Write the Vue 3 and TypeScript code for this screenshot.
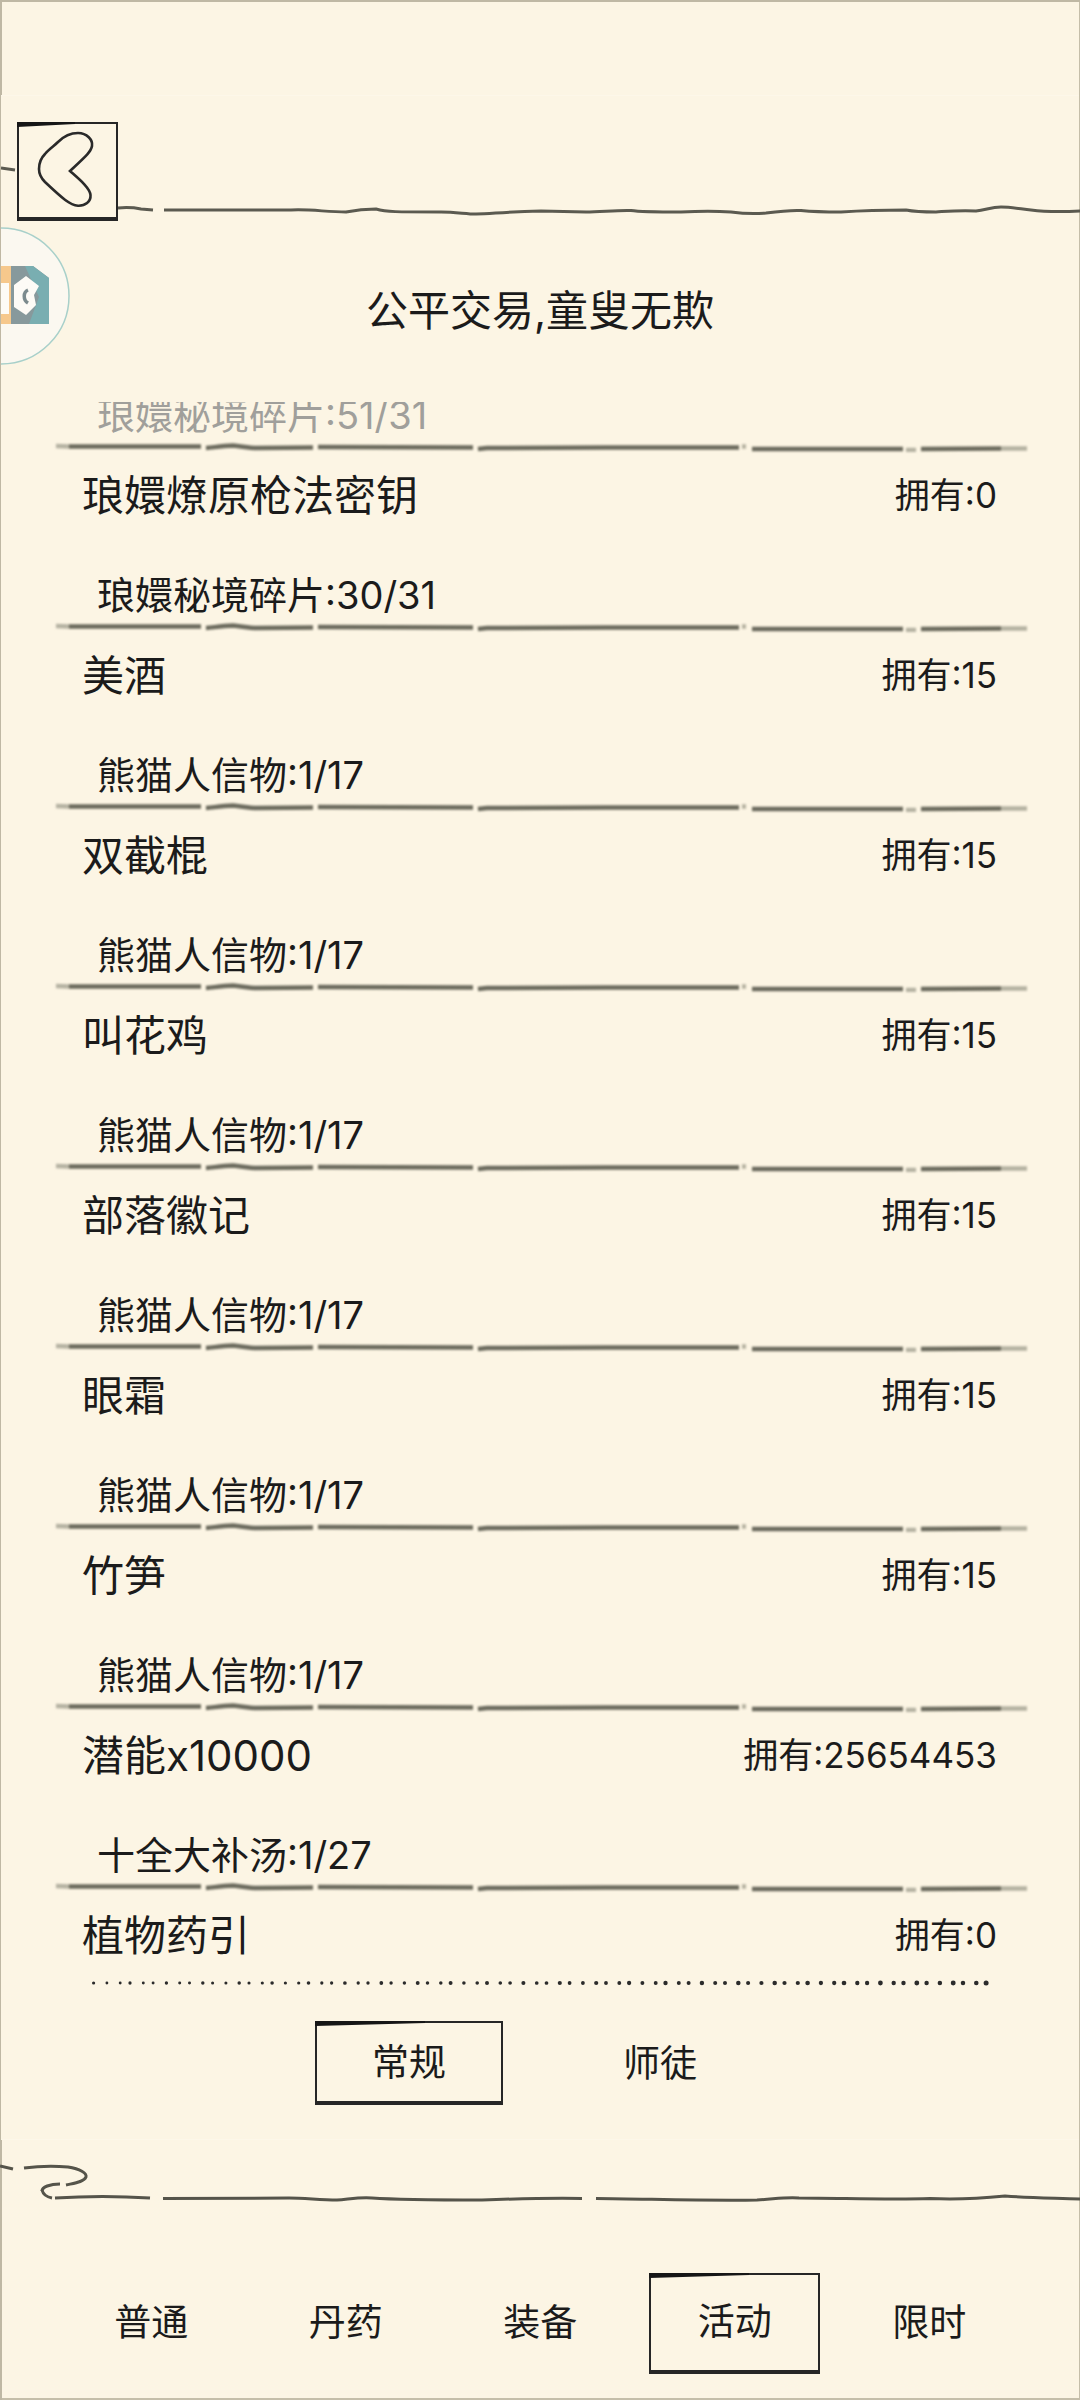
<script setup lang="ts">
interface Row {
  cost: string;
  name: string;
  own: string;
}

const rows: Row[] = [
  { cost: "琅嬛秘境碎片:51/31", name: "琅嬛燎原枪法密钥", own: "拥有:0" },
  { cost: "琅嬛秘境碎片:30/31", name: "美酒", own: "拥有:15" },
  { cost: "熊猫人信物:1/17", name: "双截棍", own: "拥有:15" },
  { cost: "熊猫人信物:1/17", name: "叫花鸡", own: "拥有:15" },
  { cost: "熊猫人信物:1/17", name: "部落徽记", own: "拥有:15" },
  { cost: "熊猫人信物:1/17", name: "眼霜", own: "拥有:15" },
  { cost: "熊猫人信物:1/17", name: "竹笋", own: "拥有:15" },
  { cost: "熊猫人信物:1/17", name: "潜能x10000", own: "拥有:25654453" },
  { cost: "十全大补汤:1/27", name: "植物药引", own: "拥有:0" },
];

const tabs = ["普通", "丹药", "装备", "活动", "限时"];
const activeTab = "活动";

// brush strokes of the divider, 1080 wide
const dividerDark = [
  "M68 4.5 L200 4.5",
  "M205 6 C212 5.5 220 4 232 3.5 C240 4 247 6 256 6 L312 5.5",
  "M317 5 L472 5.5",
  "M477 7 L486 6 L605 5.5 L738 5.5",
  "M751 7 L902 7",
  "M920 7 L1000 6.5",
];
const dividerLight = ["M55 4 L68 4.5", "M905 8 L915 8", "M1000 6.5 L1026 6.5", "M741 4.5 L745 4.5"];

// little dots under the list, getting heavier to the right
const dots = Array.from({ length: 76 }, (_, i) => {
  const wobble = ((i * 7) % 5) - 2;
  return {
    x: 94 + i * 11.9 + wobble * 0.7,
    r: 1.4 + (i / 75) * 0.9 + (i % 3 === 0 ? 0.2 : 0),
  };
});
</script>

<template>
  <div class="page">
    <div class="strip"></div>

    <section class="panel">
      <header class="head">
        <svg class="head-line" width="1080" height="100" viewBox="0 0 1080 100">
          <path d="M0 46 L14 48" />
          <path d="M117 86 C128 85 135 86 140 87 L152 88" />
          <path d="M163 88 L290 88 C310 87 325 90 345 90 C355 88 365 87 375 87 C385 90 395 90 440 90 C455 90 465 92 475 92 C490 92 500 90 540 89 L585 90 C600 90 615 88 630 88.5 C640 90 660 90 680 90 C700 89 715 89 730 90 C745 92 755 92 765 91 C780 89 790 88 800 88.5 C815 90 825 90 840 90 C855 89 870 88 905 88 C915 90 925 90 935 90 C950 89 960 88 975 89 C985 88 990 85 1000 85 C1010 85 1020 87 1030 88 C1045 90 1060 90 1080 89" />
        </svg>
        <button class="back sketch">
          <svg width="96" height="92" viewBox="0 0 96 92">
            <path
              d="M39 17 C45 11 52 8 59 8 C68 8 74 15 73 21 C72 27 66 32 51 46 C60 54 71 63 71.5 70 C72 77 66 81 59 80.7 C51 80 44 74 26 57 C21 52 20 48 20 44 C20 38 23 32 26 29 C30 24 35 21 39 17 Z"
            />
          </svg>
        </button>
      </header>

      <svg class="float-badge" width="70" height="140" viewBox="0 0 70 140">
        <circle cx="0" cy="69" r="68" fill="#fbf8f0" stroke="#a8d0ca" stroke-width="1.5" />
        <rect x="0" y="39" width="10" height="58" fill="#f6c88c" />
        <rect x="0" y="56" width="8" height="31" fill="#fdfbf6" />
        <path d="M10 39 L32 39 L48 51 L48 97 L10 97 Z" fill="#87999c" />
        <path d="M24 39 L32 39 L48 51 L48 97 L28 97 L38 70 Z" fill="#79aeb1" />
        <path d="M25 49 L38 59 L33 68 L35 78 L25 88 L13 80 L13 58 Z" fill="#fdfbf6" />
        <path d="M27 63 C22 65 22 73 27 76" fill="none" stroke="#7c8b8e" stroke-width="3.5" />
      </svg>

      <h1 class="title">公平交易,童叟无欺</h1>

      <div class="list">
        <div v-for="(row, i) in rows" :key="i" class="row">
          <div class="cost" :class="{ dim: i === 0 }">{{ row.cost }}</div>
          <svg class="divider" width="1080" height="10" viewBox="0 0 1080 10">
            <path v-for="d in dividerLight" :key="d" class="light" :d="d" />
            <path v-for="d in dividerDark" :key="d" :d="d" />
          </svg>
          <div class="item">
            <span class="name">{{ row.name }}</span>
            <span class="own">{{ row.own }}</span>
          </div>
        </div>
      </div>

      <svg class="dots" width="1080" height="8" viewBox="0 0 1080 8">
        <circle v-for="(dot, i) in dots" :key="i" :cx="dot.x" cy="4" :r="dot.r" />
      </svg>

      <div class="subtabs">
        <div class="subtab sketch">常规</div>
        <div class="subtab">师徒</div>
      </div>
    </section>

    <footer class="foot">
      <svg class="foot-line" width="1080" height="68" viewBox="0 0 1080 68">
        <path d="M0 26 L13 29" />
        <path d="M24 28 C40 26 55 26 68 27 C80 29 87 33 86 37 C84 42 75 43 66 45" />
        <path d="M60 44 C50 44 42 47 42 51" />
        <path d="M42 50 C43 54 47 57 52 58" />
        <path d="M55 58 C85 56 120 56 150 58" />
        <path d="M163 58.500 L289 58 C305 58 320 60 337 60 C350 59 360 57 372 58 C400 60 450 60 482 60 C510 59 550 58 582 58.500" />
        <path d="M596 58.500 C650 59 710 61 757 60 C775 59 785 57 799 58 C840 58 890 60 930 58.500 C960 60 985 58 1005 56 C1030 58 1055 58 1080 59" />
      </svg>
      <nav class="tabs">
        <div v-for="t in tabs" :key="t" class="tab" :class="{ sketch: t === activeTab }">{{ t }}</div>
      </nav>
    </footer>
  </div>
</template>

<style scoped>
.page {
  position: relative;
  width: 1080px;
  height: 2400px;
  overflow: hidden;
  display: flex;
  flex-direction: column;
  background: #fcf5e4;
  box-shadow: inset 2px 2px 0 #bfb8a4, inset -1px -2px 0 #c5bea9;
  color: #1b1b1b;
  font-family: Inter, "Noto Sans CJK SC", sans-serif;
}

.strip {
  height: 95px;
  flex: none;
}

.panel {
  position: relative;
  height: 2045px;
  flex: none;
  background: #fcf5e4;
  margin-left: 1px;
  margin-right: 1px;
  border-top: 1px solid #fdf7e9;
  border-bottom: 1px solid #fdf7e9;
  box-sizing: border-box;
}

.head {
  position: relative;
  padding: 26px 0 0 16px;
}

.head-line {
  position: absolute;
  left: 0;
  top: 26px;
  fill: none;
  stroke: #5b5a50;
  stroke-width: 3;
}

.sketch {
  position: relative;
  box-sizing: border-box;
  border: 2px solid #262626;
  border-bottom-width: 4px;
}

.sketch::before {
  content: "";
  position: absolute;
  left: -2px;
  top: -2px;
  width: 60%;
  height: 5px;
  background: #161616;
  clip-path: polygon(0 0, 100% 0, 100% 40%, 0 100%);
}

.back {
  position: relative;
  display: block;
  width: 101px;
  height: 99px;
  padding: 0;
  background: #fcf5e4;
}

.back svg {
  display: block;
  fill: none;
  stroke: #2a2a2a;
  stroke-width: 2.6;
}

.float-badge {
  position: absolute;
  left: 0;
  top: 131px;
}

.title {
  height: 181px;
  margin: 0;
  font-size: 42px;
  font-weight: 400;
  line-height: 179px;
  text-align: center;
}

.list {
  height: 1573px;
  overflow: hidden;
}

.row {
  height: 180px;
}

.row:first-child {
  margin-top: -16px;
}

.cost {
  height: 56px;
  padding-left: 96px;
  font-size: 38px;
  line-height: 58px;
}

.cost.dim {
  color: #a09f9b;
}

.divider {
  display: block;
  fill: none;
  stroke: #6b6a5d;
  stroke-width: 4.5;
  filter: blur(0.8px);
}

.divider .light {
  stroke: #b5b2a2;
}

.item {
  display: flex;
  align-items: center;
  justify-content: space-between;
  height: 80px;
  padding: 0 82px 0 81px;
}

.name {
  font-size: 42px;
}

.own {
  font-size: 35px;
}

.dots {
  display: block;
  margin-top: 4px;
  fill: #2b2b2b;
}

.subtabs {
  display: flex;
  gap: 63px;
  margin: 34px 0 0 314px;
}

.subtab {
  display: flex;
  align-items: center;
  justify-content: center;
  width: 188px;
  height: 84px;
  padding-bottom: 4px;
  box-sizing: border-box;
  font-size: 37px;
}

.foot {
  flex: 1;
}

.foot-line {
  display: block;
  fill: none;
  stroke: #55544a;
  stroke-width: 3;
}

.tabs {
  display: grid;
  grid-template-columns: repeat(5, 194.5px);
  margin: 65px 0 0 54px;
}

.tab {
  display: flex;
  align-items: center;
  justify-content: center;
  justify-self: center;
  width: 171px;
  height: 101px;
  padding-bottom: 7px;
  box-sizing: border-box;
  font-size: 37px;
}
</style>

<style>
html,
body {
  margin: 0;
  background: #fcf5e4;
}
</style>
